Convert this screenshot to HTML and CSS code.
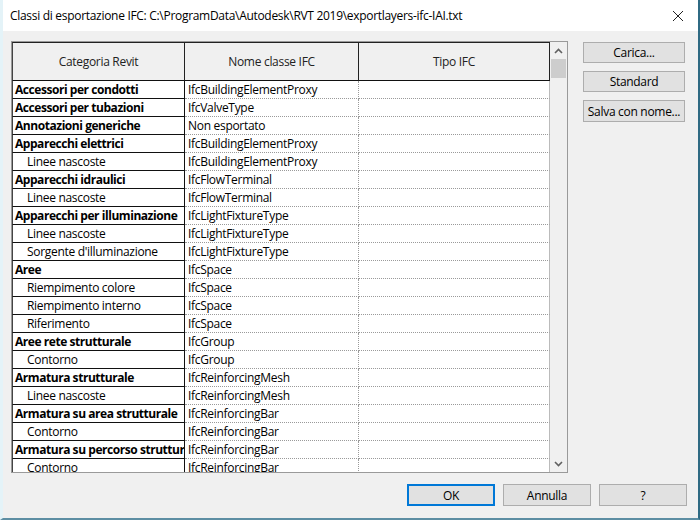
FILE: index.html
```html
<!DOCTYPE html>
<html>
<head>
<meta charset="utf-8">
<link rel="stylesheet" href="styles.css">
</head>
<body>
<div class="window">
  <div class="titlebar">
    <span class="title">Classi di esportazione IFC: C:\ProgramData\Autodesk\RVT 2019\exportlayers-ifc-IAI.txt</span>
    <svg class="close" width="12" height="12" viewBox="0 0 12 12"><path d="M1 1 L11 11 M11 1 L1 11" stroke="#222" stroke-width="1" fill="none"/></svg>
  </div>
  <div class="content">
    <div class="main">
      <div class="frame">
        <div class="grid">
          <div class="hd">Categoria Revit</div>
          <div class="hd">Nome classe IFC</div>
          <div class="hd last">Tipo IFC</div>

          <div class="c1 b">Accessori per condotti</div><div class="c2">IfcBuildingElementProxy</div><div class="c3"></div>
          <div class="c1 b">Accessori per tubazioni</div><div class="c2">IfcValveType</div><div class="c3"></div>
          <div class="c1 b">Annotazioni generiche</div><div class="c2">Non esportato</div><div class="c3"></div>
          <div class="c1 b">Apparecchi elettrici</div><div class="c2">IfcBuildingElementProxy</div><div class="c3"></div>
          <div class="c1 sub">Linee nascoste</div><div class="c2">IfcBuildingElementProxy</div><div class="c3"></div>
          <div class="c1 b">Apparecchi idraulici</div><div class="c2">IfcFlowTerminal</div><div class="c3"></div>
          <div class="c1 sub">Linee nascoste</div><div class="c2">IfcFlowTerminal</div><div class="c3"></div>
          <div class="c1 b">Apparecchi per illuminazione</div><div class="c2">IfcLightFixtureType</div><div class="c3"></div>
          <div class="c1 sub">Linee nascoste</div><div class="c2">IfcLightFixtureType</div><div class="c3"></div>
          <div class="c1 sub">Sorgente d'illuminazione</div><div class="c2">IfcLightFixtureType</div><div class="c3"></div>
          <div class="c1 b">Aree</div><div class="c2">IfcSpace</div><div class="c3"></div>
          <div class="c1 sub">Riempimento colore</div><div class="c2">IfcSpace</div><div class="c3"></div>
          <div class="c1 sub">Riempimento interno</div><div class="c2">IfcSpace</div><div class="c3"></div>
          <div class="c1 sub">Riferimento</div><div class="c2">IfcSpace</div><div class="c3"></div>
          <div class="c1 b">Aree rete strutturale</div><div class="c2">IfcGroup</div><div class="c3"></div>
          <div class="c1 sub">Contorno</div><div class="c2">IfcGroup</div><div class="c3"></div>
          <div class="c1 b">Armatura strutturale</div><div class="c2">IfcReinforcingMesh</div><div class="c3"></div>
          <div class="c1 sub">Linee nascoste</div><div class="c2">IfcReinforcingMesh</div><div class="c3"></div>
          <div class="c1 b">Armatura su area strutturale</div><div class="c2">IfcReinforcingBar</div><div class="c3"></div>
          <div class="c1 sub">Contorno</div><div class="c2">IfcReinforcingBar</div><div class="c3"></div>
          <div class="c1 b">Armatura su percorso struttur</div><div class="c2">IfcReinforcingBar</div><div class="c3"></div>
          <div class="c1 sub">Contorno</div><div class="c2">IfcReinforcingBar</div><div class="c3"></div>
        </div>
        <div class="scrollbar">
          <div class="arrow up"><svg width="9" height="6" viewBox="0 0 9 6"><path d="M1 5 L4.5 1.5 L8 5" stroke="#606060" stroke-width="1.6" fill="none"/></svg></div>
          <div class="thumb"></div>
          <div class="track"></div>
          <div class="arrow down"><svg width="9" height="6" viewBox="0 0 9 6"><path d="M1 1 L4.5 4.5 L8 1" stroke="#606060" stroke-width="1.6" fill="none"/></svg></div>
        </div>
      </div>
      <div class="side">
        <div class="btn">Carica...</div>
        <div class="btn">Standard</div>
        <div class="btn">Salva con nome...</div>
      </div>
    </div>
    <div class="footer">
      <div class="btn foot default">OK</div>
      <div class="btn foot">Annulla</div>
      <div class="btn foot">?</div>
    </div>
  </div>
</div>
</body>
</html>
```
FILE: styles.css
```css
html, body {
  margin: 0;
  padding: 0;
}
body {
  width: 700px;
  height: 520px;
  overflow: hidden;
  font-family: "Open Sans", "Noto Sans", sans-serif;
  font-size: 12px;
  color: #000;
  background: #f0f0f0;
}
.window {
  box-sizing: border-box;
  width: 700px;
  height: 520px;
  display: flex;
  flex-direction: column;
  background: #f0f0f0;
  border-left: 3px solid #e4f3f8;
  border-right: 2px solid #2f6a83;
  border-bottom: 2px solid #5d8ea3;
}
.titlebar {
  height: 31px;
  background: #ffffff;
  display: flex;
  align-items: center;
  justify-content: space-between;
  padding: 0 14px 0 7px;
  flex-shrink: 0;
}
.title {
  font-size: 12px;
  letter-spacing: -0.3px;
}
.close {
  position: relative;
  top: 0;
}
.content {
  flex: 1;
  display: flex;
  flex-direction: column;
  padding: 10px 11px 0 8px;
}
.main {
  display: flex;
  gap: 15px;
}
.frame {
  width: 555px;
  height: 430px;
  border: 1px solid #9a9a9a;
  background: #fff;
  display: flex;
  overflow: hidden;
}
.grid {
  width: 538px;
  display: grid;
  grid-template-columns: 173px 174px 191px;
  grid-template-rows: 39px;
  grid-auto-rows: 18px;
  align-content: start;
  letter-spacing: -0.3px;
}
.hd {
  height: 39px;
  box-sizing: border-box;
  background: #f0f0f0;
  border-top: 1px solid #222;
  border-bottom: 1px solid #111;
  border-right: 1px solid #222;
  display: flex;
  align-items: center;
  justify-content: center;
  font-size: 12px;
  color: #222;
}
.hd:first-child { border-left: 1px solid #444; }
.c1, .c2, .c3 {
  box-sizing: border-box;
  height: 18px;
  line-height: 17px;
  white-space: nowrap;
  overflow: hidden;
}
.c1 {
  border-left: 1px solid #444;
  border-right: 1px solid #111;
  border-bottom: 1px solid #111;
  padding-left: 2px;
}
.c1.b { font-weight: bold; letter-spacing: -0.45px; }
.c1.sub { padding-left: 14px; }
.c2 {
  padding-left: 3px;
  border-bottom: 1px dotted #9a9a9a;
  border-right: 1px dotted #9a9a9a;
}
.c3 {
  border-bottom: 1px dotted #9a9a9a;
  border-right: 1px solid #bbb;
}
.scrollbar {
  width: 17px;
  background: #f0f0f0;
  display: flex;
  flex-direction: column;
}
.arrow {
  height: 17px;
  display: flex;
  align-items: center;
  justify-content: center;
  flex-shrink: 0;
}
.thumb {
  height: 19px;
  margin: 0 1px;
  background: #cdcdcd;
  flex-shrink: 0;
}
.track { flex: 1; }
.side {
  display: flex;
  flex-direction: column;
  gap: 8px;
  padding-top: 1px;
}
.btn {
  box-sizing: border-box;
  width: 102px;
  height: 21px;
  background: #e1e1e1;
  border: 1px solid #adadad;
  display: flex;
  align-items: center;
  justify-content: center;
  font-size: 12px;
  letter-spacing: -0.3px;
}
.side .btn:last-child { height: 22px; }
.footer {
  display: flex;
  justify-content: flex-end;
  gap: 8px;
  margin-top: 11px;
}
.btn.foot {
  width: 88px;
  height: 22px;
}
.btn.default {
  border: 2px solid #0078d7;
}
```
